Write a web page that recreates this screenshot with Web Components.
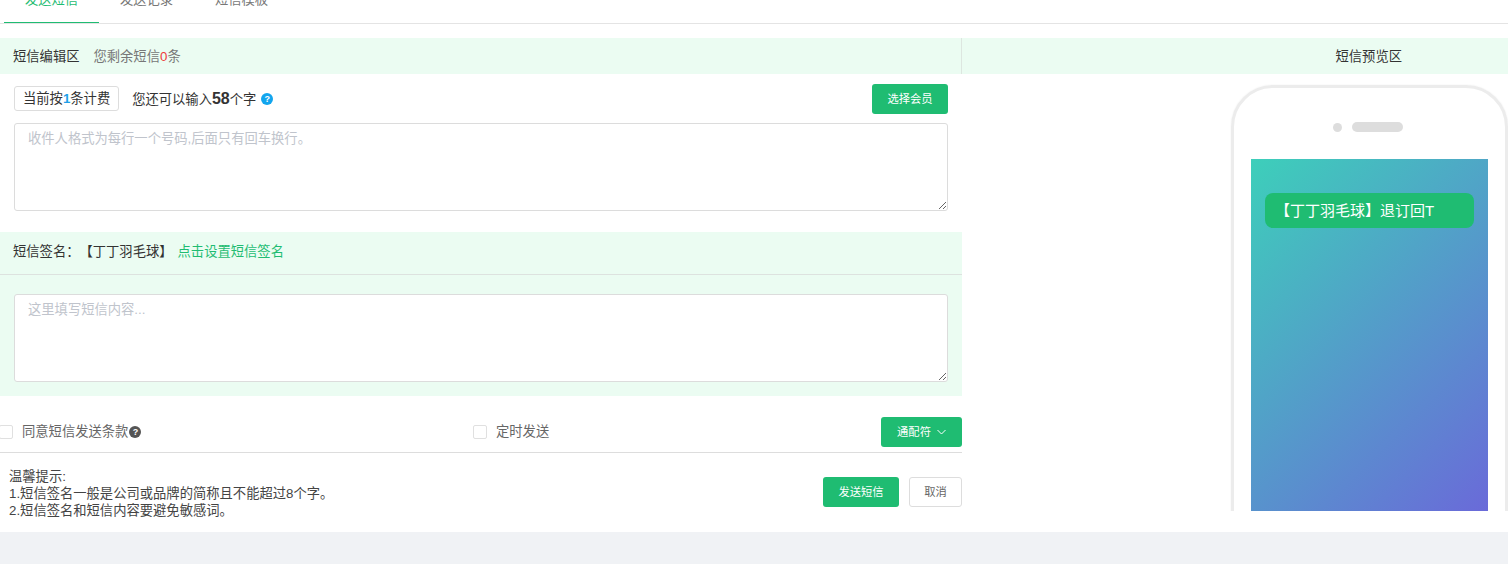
<!DOCTYPE html>
<html lang="zh">
<head>
<meta charset="utf-8">
<title>短信</title>
<style>
html, body { margin: 0; height: 100%; overflow: hidden; background: #f0f2f5; }
body { font: 13.3px/17px "Liberation Sans", "Noto Sans CJK SC", sans-serif; color: #333; text-spacing-trim: space-all; }
</style>
</head>
<body>
<sms-page>
  <sms-tabs>
    <span class="on">发送短信</span>
    <span>发送记录</span>
    <span>短信模板</span>
  </sms-tabs>
  <sms-layout>
    <sms-editor></sms-editor>
    <sms-preview slot="side"></sms-preview>
  </sms-layout>
</sms-page>

<script>
function define(name, css, html) {
  customElements.define(name, class extends HTMLElement {
    constructor() {
      super();
      this.attachShadow({ mode: 'open' });
      this.shadowRoot.innerHTML = `<style>${css}</style>${html}`;
    }
  });
}

define('sms-page', `
  :host { display: block; background: #fff; height: 532px; overflow: hidden; }
`, `<slot></slot>`);

define('sms-tabs', `
  :host { display: flex; align-items: flex-end; height: 23px; padding-left: 4px; border-bottom: 1px solid #e4e4e4; margin-bottom: 14px; }
  ::slotted(span) { display: block; box-sizing: border-box; width: 95px; padding-bottom: 12px; text-align: center; line-height: 20px; color: #777; border-bottom: 1px solid transparent; }
  ::slotted(.on) { color: #1fbc72; border-bottom-color: #1fbc72; }
`, `<slot></slot>`);

define('sms-layout', `
  :host { display: grid; grid-template-columns: 962px 1fr; align-items: start; }
`, `<slot></slot><slot name="side"></slot>`);

define('help-icon', `
  :host { display: inline-flex; align-items: center; justify-content: center; width: 12px; height: 12px; border-radius: 50%; background: var(--help, #12a5ee); color: #fff; font: bold 9px/12px "Liberation Sans", sans-serif; }
`, `?`);

define('sms-button', `
  :host { display: inline-flex; align-items: center; justify-content: center; gap: 6px; box-sizing: border-box; height: 30px; width: var(--w, 76px); border-radius: 3px; background: #1fbc72; color: #fff; font-size: 11.3px; }
  :host([plain]) { background: #fff; color: #666; border: 1px solid #ddd; }
`, `<slot></slot>`);

define('sms-field', `
  :host { display: block; position: relative; height: 88px; margin: 0 14px; }
  textarea { display: block; box-sizing: border-box; width: 100%; height: 100%; margin: 0; border: 1px solid #dcdcdc; border-radius: 3px; background: #fff; outline: none; }
  span { position: absolute; left: 14px; top: 7px; color: #c0c4cc; pointer-events: none; }
`, `<textarea></textarea><span><slot></slot></span>`);

define('sms-check', `
  :host { display: inline-flex; align-items: center; gap: 9px; color: #666; }
  i { display: block; box-sizing: border-box; width: 14px; height: 14px; border: 1px solid #e0e0e0; border-radius: 2px; background: #fff; }
  span { display: flex; align-items: center; margin-top: -1px; }
`, `<i></i><span><slot></slot></span>`);

define('sms-editor', `
  :host { display: block; }
  .bar { display: flex; align-items: center; height: 36px; padding: 1px 0 0 13px; background: #ebfcf2; border-right: 1px solid #dde6e0; box-sizing: border-box; }
  .bar em { font-style: normal; color: #777; margin-left: 14px; }
  .bar b { font-weight: normal; color: #ee3b3b; }
  .count { display: flex; align-items: center; height: 30px; margin: 10px 14px 9px; }
  .rule { display: flex; align-items: center; height: 25px; box-sizing: border-box; padding: 0 8px 0 8px; margin-top: -1px; border: 1px solid #ddd; border-radius: 3px; }
  .rule b { color: #1e9fe8; }
  .left { margin-left: 13px; margin-right: 5px; }
  .left b { font-size: 16px; }
  .push { margin-left: auto; }
  .sign { background: #ebfcf2; margin-top: 21px; padding-bottom: 14px; }
  .signrow { display: flex; align-items: center; box-sizing: border-box; padding: 0 0 4px 13px; border-bottom: 1px solid #dde2df; margin-bottom: 19px; height: 43px; }
  .signrow a { color: #1fbc72; margin-left: 5px; }
  .opts { display: grid; grid-template-columns: 473px 1fr auto; align-items: center; height: 30px; margin-top: 21px; }
  .opts sms-check:first-child { margin-left: -1px; }
  .opts help-icon { --help: #555; margin-left: 1px; }
  .foot { display: flex; align-items: flex-start; gap: 10px; border-top: 1px solid #ddd; margin-top: 5px; padding: 15px 0 14px 9px; color: #444; }
  .foot sms-button { margin-top: 9px; }
  .tips { flex: 1; }
  svg { display: block; }
`, `
  <div class="bar">短信编辑区<em>您剩余短信<b>0</b>条</em></div>
  <div class="count">
    <span class="rule">当前按<b>1</b>条计费</span>
    <span class="left">您还可以输入<b>58</b>个字</span>
    <help-icon></help-icon>
    <sms-button class="push">选择会员</sms-button>
  </div>
  <sms-field>收件人格式为每行一个号码,后面只有回车换行。</sms-field>
  <div class="sign">
    <div class="signrow">短信签名：【丁丁羽毛球】<a>点击设置短信签名</a></div>
    <sms-field>这里填写短信内容...</sms-field>
  </div>
  <div class="opts">
    <sms-check>同意短信发送条款<help-icon></help-icon></sms-check>
    <sms-check>定时发送</sms-check>
    <sms-button style="--w:81px">通配符
      <svg width="9" height="6" viewBox="0 0 9 6"><path d="M.5 1l4 4 4-4" fill="none" stroke="#fff" stroke-width="1"/></svg>
    </sms-button>
  </div>
  <div class="foot">
    <div class="tips">温馨提示:<br>1.短信签名一般是公司或品牌的简称且不能超过8个字。<br>2.短信签名和短信内容要避免敏感词。</div>
    <sms-button>发送短信</sms-button>
    <sms-button plain style="--w:53px">取消</sms-button>
  </div>
`);

define('sms-preview', `
  :host { display: block; height: 473px; overflow: hidden; }
  .bar { display: flex; justify-content: flex-end; align-items: center; box-sizing: border-box; height: 36px; background: #ebfcf2; padding: 1px 106px 0 0; }
  .phone { box-sizing: border-box; width: 277px; height: 520px; margin: 11px 0 0 auto; padding: 34px 17px 0; border: 3px solid #ececec; border-radius: 42px; box-shadow: 0 0 2px #eee; }
  .top { display: flex; align-items: center; justify-content: center; gap: 10px; height: 10px; margin-bottom: 27px; margin-left: -4px; }
  .dot { width: 9px; height: 9px; border-radius: 50%; background: #ddd; }
  .spk { width: 51px; height: 10px; border-radius: 5px; background: #ddd; }
  .screen { height: 352px; padding: 34px 14px 0; box-sizing: border-box; background: linear-gradient(135deg, #3dcfba, #6a6ad9); }
  .msg { display: flex; align-items: center; height: 35px; padding-left: 10px; border-radius: 8px; background: #1fbc72; color: #fff; font-size: 15px; }
`, `
  <div class="bar">短信预览区</div>
  <div class="phone">
    <div class="top"><span class="dot"></span><span class="spk"></span></div>
    <div class="screen"><div class="msg">【丁丁羽毛球】退订回T</div></div>
  </div>
`);
</script>
</body>
</html>
